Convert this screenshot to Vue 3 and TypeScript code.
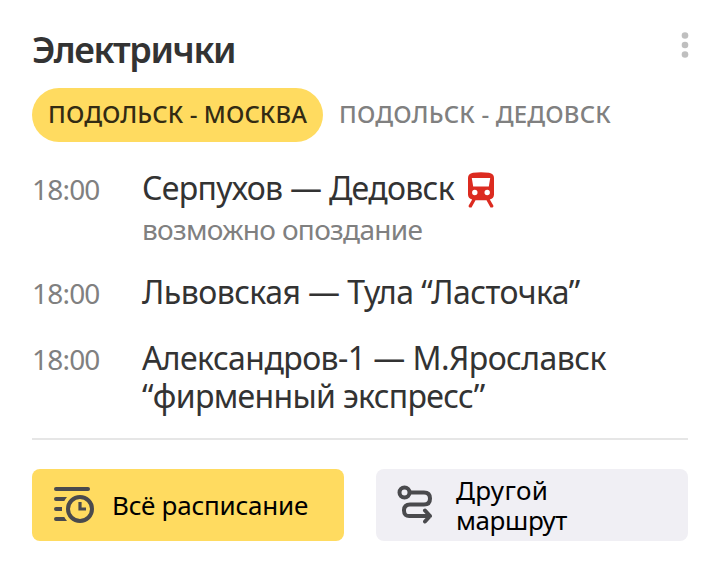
<script setup lang="ts">
import { ref } from 'vue'

interface Line { text: string; tracking: string }
interface Train { time: string; lines: Line[]; note?: string; alert?: boolean }

const active = ref(0)
const tabs: Line[] = [
  { text: 'ПОДОЛЬСК - МОСКВА', tracking: '0.09px' },
  { text: 'ПОДОЛЬСК - ДЕДОВСК', tracking: '0.17px' },
]
const trains: Train[] = [
  { time: '18:00', lines: [{ text: 'Серпухов — Дедовск', tracking: '-0.7px' }], note: 'возможно опоздание', alert: true },
  { time: '18:00', lines: [{ text: 'Львовская — Тула “Ласточка”', tracking: '-0.55px' }] },
  {
    time: '18:00',
    lines: [
      { text: 'Александров-1 — М.Ярославск', tracking: '-0.57px' },
      { text: '“фирменный экспресс”', tracking: '-0.68px' },
    ],
  },
]
</script>

<template>
  <main class="card">
    <header class="head">
      <h1 class="title">Электрички</h1>
      <button class="more" aria-label="Меню">
        <svg width="8" height="28" viewBox="0 0 8 28"><g fill="#bfbfbf"><circle cx="4" cy="4.500" r="3.300" /><circle cx="4" cy="14" r="3.300" /><circle cx="4" cy="23.500" r="3.300" /></g></svg>
      </button>
    </header>
    <nav class="tabs">
      <button v-for="(t, i) in tabs" :key="t.text" class="tab" :class="{ active: i === active }" :style="{ letterSpacing: t.tracking }" @click="active = i">{{ t.text }}</button>
    </nav>
    <ul class="list">
      <li v-for="(t, i) in trains" :key="i" class="row">
        <span class="time">{{ t.time }}</span>
        <div class="info">
          <div v-for="l in t.lines" :key="l.text" class="route">
            <span :style="{ letterSpacing: l.tracking }">{{ l.text }}</span>
            <svg v-if="t.alert" class="train" width="28" height="36" viewBox="0 0 28 36"><path fill="#dc2b20" fill-rule="evenodd" d="M6 .8Q14-.2 22 .8Q27 1.600 27 6V22.500Q27 26.600 22.800 27.500L26.300 33.500Q26.800 35.500 25 35.500H23.500L19.500 28.300H8.500L4.500 35.500H3Q1.200 35.500 1.700 33.500L5.200 27.500Q1 26.600 1 22.500V6Q1 1.600 6 .8ZM4.800 6L6.200 14.500H21.800L23.200 6ZM7.800 17.800a2.700 2.700 0 1 0 0 5.400a2.700 2.700 0 1 0 0-5.400ZM20.200 17.800a2.700 2.700 0 1 0 0 5.400a2.700 2.700 0 1 0 0-5.400Z" /></svg>
          </div>
          <div v-if="t.note" class="note">{{ t.note }}</div>
        </div>
      </li>
    </ul>
    <footer class="actions">
      <button class="action primary">
        <svg class="icon" width="44" height="40" viewBox="0 0 44 40" fill="none" stroke="#4a4a4d" stroke-width="4" stroke-linecap="round"><path d="M4 4H36" /><path d="M4 14H11M4 24H8M4 34H11" /><path d="M10 12H15L12 16H10ZM8 22H10V26H8ZM10 32H12L15 36H10Z" fill="#4a4a4d" stroke="none" /><circle cx="28" cy="24" r="12" /><path d="M28 17V24H34" stroke-width="3.200" stroke-linecap="butt" /></svg>
        <span class="all">Всё расписание</span>
      </button>
      <button class="action">
        <svg class="icon" width="44" height="40" viewBox="0 0 44 40" fill="none" stroke="#4a4a4d" stroke-width="4" stroke-linecap="round" stroke-linejoin="round"><circle cx="8.500" cy="7.500" r="5" /><path d="M14 7.500H28Q34 7.500 34 13.500T28 19.500H14Q8 19.500 8 25.500T14 31H34M29 25.500L34 31L29 36.500" /></svg>
        <span class="label"><span class="other">Другой</span><span class="path">маршрут</span></span>
      </button>
    </footer>
  </main>
</template>

<style>
body { margin: 0; background: #fff; }
</style>
<style scoped>
.card { box-sizing: border-box; width: 720px; height: 569px; padding: 27px 32px 0; font-family: 'Noto Sans', sans-serif; color: #333; }
button { border: 0; padding: 0; background: none; font: inherit; color: inherit; }
.head { display: flex; justify-content: space-between; height: 61px; }
.title { margin: 0; padding-top: 1px; font-size: 36px; line-height: 44px; font-weight: 600; letter-spacing: -1.4px; }
.more { display: flex; align-self: flex-start; margin-top: 4px; margin-right: -1px; }
.tabs { display: flex; height: 54px; }
.tab { height: 54px; padding: 0 16px 3px; border-radius: 27px; font-size: 24px; line-height: 51px; font-weight: 500; color: #808080; white-space: nowrap; }
.tab.active { background: #ffdb60; color: #332b13; }
.list { list-style: none; margin: 27px 0 0; padding: 0; height: 269px; border-bottom: 2px solid #e6e6e6; }
.row { display: flex; align-items: baseline; margin-bottom: 27px; }
.time { width: 110px; font-size: 28px; line-height: 38px; letter-spacing: -0.8px; color: #808080; }
.route { display: flex; font-size: 32px; line-height: 38px; white-space: nowrap; }
.note { margin-top: 6px; padding-bottom: 1px; font-size: 28px; line-height: 32px; letter-spacing: -0.68px; color: #808080; }
.train { margin: 3px 0 -1px 13px; }
.actions { display: grid; grid-template-columns: 1fr 1fr; gap: 32px; margin-top: 29px; }
.action { display: flex; align-items: center; height: 72px; padding-left: 20px; border-radius: 8px; background: #f0eff4; color: #000; font-size: 26px; line-height: 30px; text-align: left; }
.action.primary { background: #ffdb60; }
.icon { margin-right: 16px; }
.label { display: flex; flex-direction: column; }
.all { letter-spacing: -0.23px; }
.other { letter-spacing: 0.4px; }
.path { letter-spacing: -0.4px; }
</style>
